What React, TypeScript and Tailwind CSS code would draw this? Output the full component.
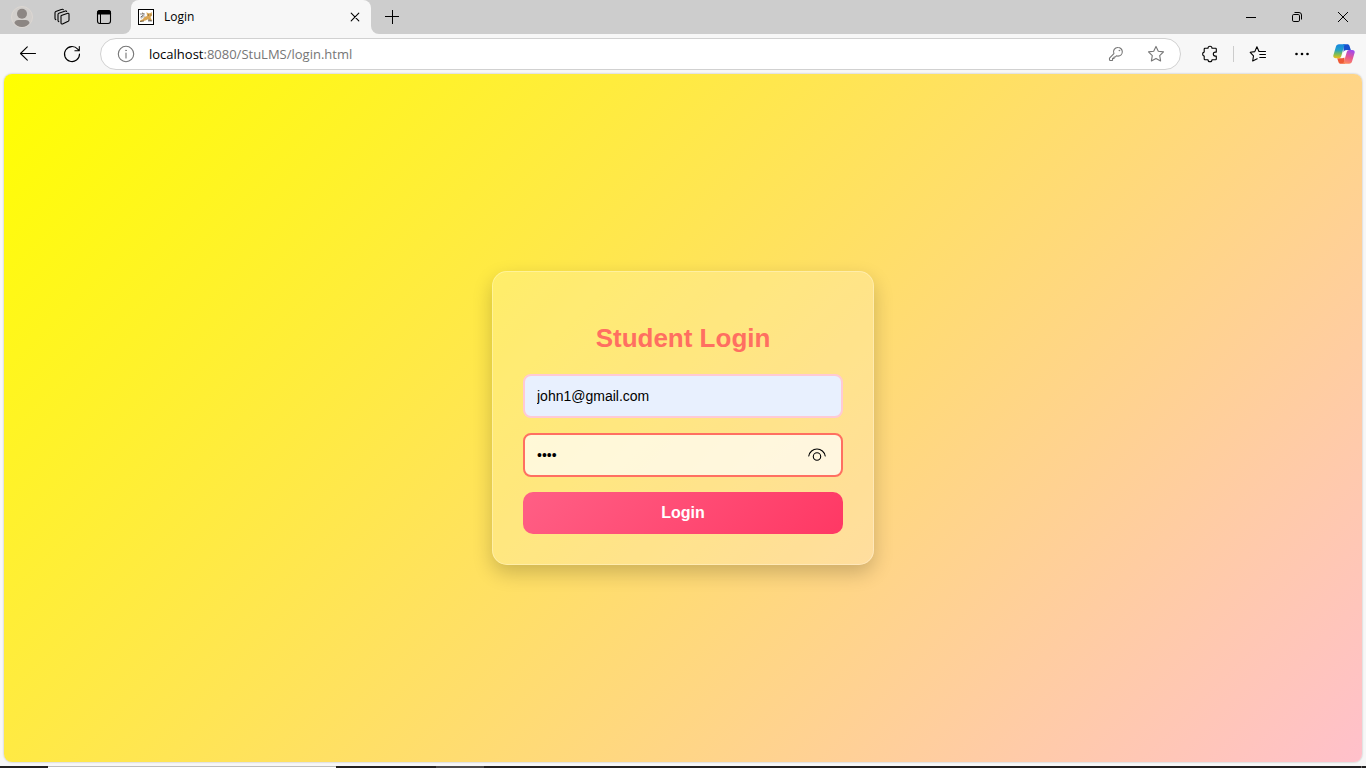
import React, { useState } from "react";

const line = {
  fill: "none",
  stroke: "currentColor",
  strokeWidth: 1.1,
  strokeLinecap: "round" as const,
  strokeLinejoin: "round" as const,
};

function IconButton({ label, className = "", children }: { label: string; className?: string; children: React.ReactNode }) {
  return (
    <button type="button" aria-label={label} className={`flex shrink-0 items-center justify-center ${className}`}>
      {children}
    </button>
  );
}

function TabStrip() {
  return (
    <header className="flex h-[34px] shrink-0 text-black">
      <div className="flex w-[131px] shrink-0 items-center rounded-br-lg bg-[#cdcdcd] pl-[11px]">
        <IconButton label="Profile" className="size-[22px]">
          <svg width="22" height="22" viewBox="0 0 22 22">
            <circle cx="11" cy="11" r="10.5" fill="#d2cfcc" stroke="#dcd7d2" />
            <circle cx="11" cy="7.8" r="5" fill="#8c8683" />
            <path d="M3.4 17c.5-2 1.9-3 3.8-3h7.600c1.900 0 3.300 1 3.800 3-1.700 2.700-4.400 4-7.600 4s-5.900-1.300-7.600-4z" fill="#8c8683" />
          </svg>
        </IconButton>
        <IconButton label="Workspaces" className="ml-[19px] size-[20px]">
          <svg width="18" height="18" viewBox="0 0 18 18" {...line}>
            <path d="M8.300 7.600l6.500-2.300c.7-.2 1.200.2 1.200.9v5.800c0 .5-.3.900-.8 1.200l-5.700 2.700c-.7.300-1.500-.1-1.500-.9V7.900" />
            <path d="M5.800 13.600c-.5-.1-.8-.5-.8-1V6.400c0-.5.300-.9.800-1.100L12.400 3c.5-.2 1 0 1.200.5" />
            <path d="M2.800 11.600c-.5-.1-.8-.5-.8-1V4.700c0-.5.300-.9.800-1.100L9 1.300c.5-.2 1 0 1.300.4" />
          </svg>
        </IconButton>
        <IconButton label="Tab actions" className="ml-[21px] size-[22px]">
          <svg width="16" height="16" viewBox="0 0 16 16" {...line}>
            <rect x="1.500" y="1.500" width="13" height="13" rx="2.400" />
            <path d="M1.500 5V4a2.500 2.500 0 0 1 2.500-2.500h8A2.500 2.500 0 0 1 14.500 4v1z" fill="currentColor" />
            <path d="M4.500 5v9" strokeWidth="1" />
          </svg>
        </IconButton>
      </div>
      <div className="w-[240px] shrink-0 bg-[#cdcdcd]">
        <div className="flex h-full items-center rounded-t-lg bg-[#f7f7f7] pl-[7px] pr-[8px]">
          <svg width="16" height="16" viewBox="0 0 16 16" aria-hidden="true">
            <rect x=".5" y=".5" width="15" height="15" fill="#fff" stroke="#000" />
            <path d="M2 4h5v2H2zM2 8l3-2 3 1-5 3zM10 11h4v2h-4z" fill="#c5c6cb" />
            <path d="M8.500 3l1.500 1.200h2.200L13.700 3l.3 3.400-1.500 1.500 1 2.500 1 1-2.500-.2-2-1-2.500 1.200-3.500.8-2 .3.500-1.500 2-.5 2-2.500 2.500-1z" fill="#d9a553" />
            <path d="M2 12.500l4-.5M10 11l3.500.5M3 8l2.500-2M4 4l1.500.5M10 6h1M12.500 6h.8" stroke="#574629" strokeWidth=".8" fill="none" />
          </svg>
          <span className="ml-[10px] grow font-['Open_Sans',sans-serif] text-[12px] leading-4">Login</span>
          <IconButton label="Close tab" className="size-[16px]">
            <svg width="10" height="10" viewBox="0 0 10 10" {...line}>
              <path d="M1.200 1.200l7.600 7.600M8.800 1.200L1.200 8.800" />
            </svg>
          </IconButton>
        </div>
      </div>
      <div className="flex grow items-center rounded-bl-lg bg-[#cdcdcd] pl-[11px]">
        <IconButton label="New tab" className="size-[20px]">
          <svg width="14" height="14" viewBox="0 0 14 14" fill="none" stroke="currentColor">
            <path d="M7.500 0v14M0 6.500h14" />
          </svg>
        </IconButton>
        <div className="ml-auto flex h-full">
          <IconButton label="Minimize" className="w-[46px]">
            <svg width="10" height="10" viewBox="0 0 10 10" stroke="currentColor"><path d="M0 5.500h10" /></svg>
          </IconButton>
          <IconButton label="Restore" className="w-[46px]">
            <svg width="10" height="10" viewBox="0 0 10 10" fill="none" stroke="currentColor">
              <rect x=".5" y="2.500" width="7" height="7" rx="1.300" />
              <path d="M2.500.5h4.500a2.500 2.500 0 0 1 2.500 2.500v4.500" />
            </svg>
          </IconButton>
          <IconButton label="Close" className="w-[46px]">
            <svg width="10" height="10" viewBox="0 0 10 10" stroke="currentColor"><path d="M0 0l10 10M10 0L0 10" /></svg>
          </IconButton>
        </div>
      </div>
    </header>
  );
}

const star = "M9 1.400l2.300 4.800 5.200.7-3.800 3.700.9 5.300L9 13.400l-4.600 2.500.9-5.300L1.500 6.900l5.200-.7z";

function Toolbar() {
  return (
    <nav aria-label="Browser toolbar" className="flex h-[40px] shrink-0 items-center pl-[16px] pr-[10px] text-black">
      <IconButton label="Back" className="size-[24px]">
        <svg width="18" height="16" viewBox="0 0 18 16" {...line}>
          <path d="M16.500 7.500H1.800M8.300.8L1.500 7.500l6.800 6.700" />
        </svg>
      </IconButton>
      <IconButton label="Refresh" className="ml-[20px] size-[24px]">
        <svg width="18" height="18" viewBox="0 0 18 18" {...line}>
          <path d="M16.500 9A7.500 7.500 0 1 1 14.700 4.200L16 5.500M16.300 1.500v4.200h-4.400" />
        </svg>
      </IconButton>
      <div className="ml-[16px] flex h-[32px] grow items-center rounded-full border border-[#d1d1d1] bg-white pl-[16px] pr-[15px] text-[#767676]">
        <IconButton label="View site information" className="size-[18px]">
          <svg width="18" height="18" viewBox="0 0 18 18" {...line}>
            <circle cx="9" cy="9" r="7.700" />
            <path d="M9 8v5" />
            <circle cx="9" cy="5.400" r=".5" fill="currentColor" stroke="currentColor" strokeWidth=".5" />
          </svg>
        </IconButton>
        <div role="textbox" aria-label="Address" tabIndex={0} className="ml-[14px] grow font-['Open_Sans',sans-serif] text-[13px] leading-5">
          <span className="text-black">localhost</span>:8080/StuLMS/login.html
        </div>
        <IconButton label="Saved passwords" className="size-[20px]">
          <svg width="16" height="16" viewBox="0 0 16 16" {...line}>
            <path d="M10 1.500a4.300 4.300 0 0 1 0 8.600c-.6 0-1.100-.1-1.600-.3L7.300 11H6v1.400H4.600V14l-.5.500H2.300a.8.800 0 0 1-.8-.8v-1.600l4.400-4.500A4.300 4.300 0 0 1 10 1.500z" />
            <circle cx="11.300" cy="4.600" r=".5" fill="currentColor" strokeWidth=".4" />
          </svg>
        </IconButton>
        <IconButton label="Add to favorites" className="ml-[21px] size-[18px]">
          <svg width="18" height="18" viewBox="0 0 18 18" {...line}><path d={star} /></svg>
        </IconButton>
      </div>
      <IconButton label="Extensions" className="ml-[20px] size-[18px]">
        <svg width="18" height="18" viewBox="0 0 18 18" {...line}>
          <path d="M4 3.300h3a2 2 0 0 1 4 0h3.500a.8.800 0 0 1 .8.800v3h-1a2 2 0 0 0 0 4h1V14a.8.800 0 0 1-.8.800H11a2 2 0 0 1-4 0H4a.8.800 0 0 1-.8-.8v-2.900a2.050 2.050 0 0 1 0-4V4.100a.8.800 0 0 1 .8-.8z" />
        </svg>
      </IconButton>
      <span className="ml-[14px] h-[16px] w-px bg-[#cccccc]" />
      <IconButton label="Favorites" className="ml-[15px] size-[18px]">
        <svg width="18" height="18" viewBox="0 0 18 18" {...line}>
          <path d="M8.200 13.700L3.700 16l.8-5.200-3.300-3.500 4.600-.7L7.900 1.800 10 6.500h6.500M10.800 9.500h5.700M10.800 12.500h5.700" />
        </svg>
      </IconButton>
      <IconButton label="Settings and more" className="ml-[26px] size-[18px]">
        <svg width="16" height="16" viewBox="0 0 16 16" fill="currentColor">
          <circle cx="2.500" cy="8" r="1.300" /><circle cx="8" cy="8" r="1.300" /><circle cx="13.500" cy="8" r="1.300" />
        </svg>
      </IconButton>
      <IconButton label="Copilot" className="ml-[21px] h-[22px] w-[24px]">
        <svg width="22" height="20" viewBox="0 0 24 22">
          <defs>
            <linearGradient id="cp-left" x1="0" y1="0" x2="0" y2="1">
              <stop offset="0" stopColor="#1686e0" /><stop offset=".4" stopColor="#22a0c9" />
              <stop offset=".7" stopColor="#7dbd55" /><stop offset="1" stopColor="#f4bd17" />
            </linearGradient>
            <linearGradient id="cp-right" x1=".6" y1="0" x2=".3" y2="1">
              <stop offset="0" stopColor="#a04aed" /><stop offset=".5" stopColor="#e65692" /><stop offset="1" stopColor="#ff8c5a" />
            </linearGradient>
          </defs>
          <path d="M11 .3h4.500c1.400 0 2.200.7 2.600 2l1.400 4.200H15c-2 0-2.800 1-3.300 2.700z" fill="#1750ce" />
          <path d="M13 21.700H8.500c-1.400 0-2.200-.7-2.600-2l-1.400-4H9c2 0 2.800-1 3.300-2.900z" fill="#ee5a36" />
          <path d="M12.300 7.500h3l-2.500 7.500H9z" fill="#ffffff" />
          <path d="M6.500.3h7.300c-1.100.5-1.600 1.700-2 3L9 13.300c-.5 1.600-1.300 2.400-2.900 2.400H3c-2.200 0-3.200-1.500-2.600-3.500L3 3.200C3.500 1.300 4.600.3 6.500.3z" fill="url(#cp-left)" />
          <path d="M17.500 21.700h-7.300c1.100-.5 1.600-1.700 2-3L15 9c.5-1.600 1.300-2.500 2.900-2.500H21c2.200 0 3.200 1.500 2.600 3.500L21 18.800c-.5 1.900-1.600 2.900-3.500 2.900z" fill="url(#cp-right)" />
        </svg>
      </IconButton>
    </nav>
  );
}

function LoginCard() {
  const [email, setEmail] = useState("john1@gmail.com");
  const [password, setPassword] = useState("john");
  const [visible, setVisible] = useState(false);
  return (
    <form
      onSubmit={(e) => e.preventDefault()}
      className="flex w-full max-w-[382px] flex-col rounded-[15px] border border-white/30 bg-white/20 px-[30px] pb-[30px] pt-[51px] shadow-[0_8px_20px_rgba(0,0,0,0.2)]"
    >
      <h1 className="mb-[21px] text-center text-[26px] font-bold leading-[30px] text-[#ff6f61]">Student Login</h1>
      <input
        type="email"
        aria-label="Email"
        value={email}
        onChange={(e) => setEmail(e.target.value)}
        className="h-[44px] w-full rounded-lg border-2 border-[#ffcad4] bg-[#e8f0fe] px-[12px] text-[14px] text-black outline-none"
      />
      <div className="mt-[15px] flex h-[44px] items-center rounded-lg border-2 border-[#ff6f61] bg-white/70 pl-[12px] pr-[14px]">
        <input
          type={visible ? "text" : "password"}
          aria-label="Password"
          value={password}
          onChange={(e) => setPassword(e.target.value)}
          className="min-w-0 grow bg-transparent text-[14px] text-black outline-none"
        />
        <button type="button" aria-label="Show password" onClick={() => setVisible(!visible)}>
          <svg width="20" height="14" viewBox="0 0 20 14" {...line}>
            <path d="M1.800 8a8.300 8.300 0 0 1 16.400 0" />
            <circle cx="10" cy="8.500" r="3.700" />
          </svg>
        </button>
      </div>
      <button
        type="submit"
        className="mt-[15px] h-[42px] w-full rounded-[10px] bg-[linear-gradient(135deg,#ff5f85,#ff3864)] text-[16px] font-bold text-white"
      >
        Login
      </button>
    </form>
  );
}

export default function App() {
  return (
    <div className="flex h-screen flex-col overflow-hidden bg-[#f7f7f7] font-['Liberation_Sans',Arial,sans-serif]">
      <TabStrip />
      <Toolbar />
      <main className="mx-[4px] mb-[4px] flex min-h-0 grow items-center justify-center rounded-lg bg-[linear-gradient(135deg,#ffff00,#ffc0cb)] shadow-[0_0_2px_rgba(0,0,0,0.3)]">
        <LoginCard />
      </main>
      <div className="flex h-[2px] shrink-0 bg-[#222021]">
        <div className="ml-[48px] w-[288px] border-t border-[#bdbdbd] bg-white" />
        <div className="ml-[100px] w-[48px] bg-[#4b494a]" />
        <div className="ml-auto mr-[4px] w-px bg-[#6b6b6b]" />
      </div>
    </div>
  );
}
